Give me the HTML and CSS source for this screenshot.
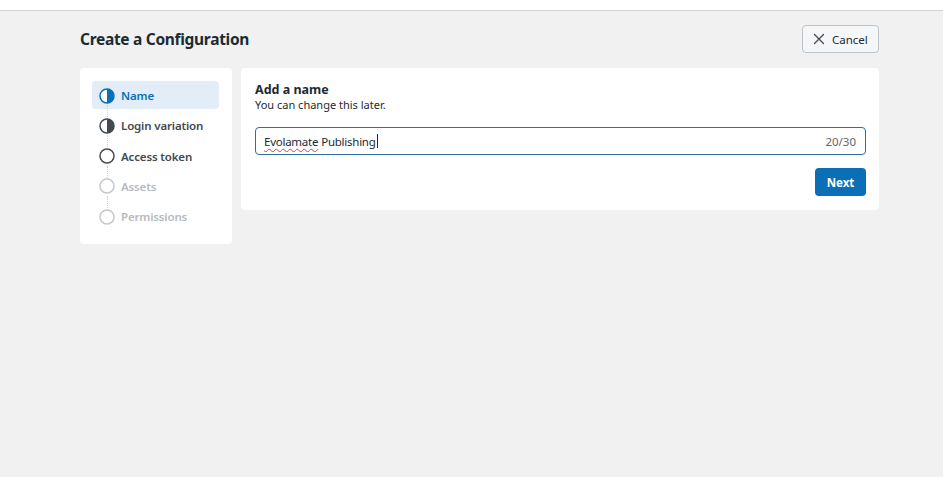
FILE: index.html
```html
<!DOCTYPE html>
<html lang="en">
<head>
<meta charset="utf-8">
<title>Create a Configuration</title>
<link rel="stylesheet" href="styles.css">
</head>
<body>
<div class="topbar"></div>
<main class="page">
  <header class="page-header">
    <h1 class="page-title">Create a Configuration</h1>
    <button class="btn-cancel" type="button">
      <svg class="x-icon" width="12" height="12" viewBox="0 0 12 12" aria-hidden="true">
        <path d="M1.5 1.5 L10.5 10.5 M10.5 1.5 L1.5 10.5" stroke="#444950" stroke-width="1.3" stroke-linecap="round" fill="none"/>
      </svg>
      <span>Cancel</span>
    </button>
  </header>
  <div class="content">
    <nav class="steps">
      <div class="step step-active">
        <svg class="step-icon" width="16" height="16" viewBox="0 0 16 16">
          <circle cx="8" cy="8" r="7" fill="#fff" stroke="#0a6fb5" stroke-width="1.5"/>
          <path d="M8 1 A7 7 0 0 1 8 15 Z" fill="#0a6fb5"/>
        </svg>
        <span class="step-label">Name</span>
      </div>
      <div class="step step-done">
        <svg class="step-icon" width="16" height="16" viewBox="0 0 16 16">
          <circle cx="8" cy="8" r="7" fill="#fff" stroke="#444950" stroke-width="1.5"/>
          <path d="M8 1 A7 7 0 0 1 8 15 Z" fill="#444950"/>
        </svg>
        <span class="step-label">Login variation</span>
      </div>
      <div class="step step-next">
        <svg class="step-icon" width="16" height="16" viewBox="0 0 16 16">
          <circle cx="8" cy="8" r="7" fill="#fff" stroke="#444950" stroke-width="1.5"/>
        </svg>
        <span class="step-label">Access token</span>
      </div>
      <div class="step step-disabled">
        <svg class="step-icon" width="16" height="16" viewBox="0 0 16 16">
          <circle cx="8" cy="8" r="7" fill="#fff" stroke="#c4c7cb" stroke-width="1.5"/>
        </svg>
        <span class="step-label">Assets</span>
      </div>
      <div class="step step-disabled step-last">
        <svg class="step-icon" width="16" height="16" viewBox="0 0 16 16">
          <circle cx="8" cy="8" r="7" fill="#fff" stroke="#c4c7cb" stroke-width="1.5"/>
        </svg>
        <span class="step-label">Permissions</span>
      </div>
    </nav>
    <section class="card">
      <h2 class="card-title">Add a name</h2>
      <p class="card-sub">You can change this later.</p>
      <div class="field">
        <span class="field-value"><span class="spell">Evolamate</span> Publishing<span class="caret"></span></span>
        <span class="field-count">20/30</span>
      </div>
      <div class="actions">
        <button class="btn-next" type="button">Next</button>
      </div>
    </section>
  </div>
</main>
</body>
</html>
```

FILE: styles.css
```css
* { box-sizing: border-box; }

html, body {
  margin: 0;
  padding: 0;
  background: #f1f1f1;
  font-family: "Noto Sans", "Open Sans", sans-serif;
  color: #1c2b33;
}

.topbar {
  height: 11px;
  background: #fff;
  border-bottom: 1px solid #d4d4d4;
}

.page {
  padding: 0 64px 0 80px;
}

.page-header {
  display: flex;
  align-items: center;
  justify-content: space-between;
  margin-top: 14px;
  height: 28px;
}

.page-title {
  margin: 0;
  font-size: 15.5px;
  font-weight: 700;
  color: #1c2b33;
  letter-spacing: -0.3px;
}

.btn-cancel {
  display: flex;
  align-items: center;
  gap: 7px;
  height: 28px;
  width: 77px;
  padding: 0 0 0 10px;
  background: #f5f6f7;
  border: 1px solid #bec3c9;
  border-radius: 4px;
  font-family: inherit;
  font-size: 11.5px;
  color: #1c2b33;
}

.content {
  display: flex;
  align-items: flex-start;
  gap: 9px;
  margin-top: 15px;
}

.steps {
  width: 152px;
  flex: none;
  background: #fff;
  border-radius: 4px;
  padding: 13px 13px 14px 12px;
  display: flex;
  flex-direction: column;
  gap: 2.25px;
}

.step {
  position: relative;
  display: flex;
  align-items: center;
  gap: 6px;
  height: 28px;
  padding-left: 7px;
  padding-top: 1px;
  border-radius: 4px;
  font-size: 11.5px;
  font-weight: 600;
  letter-spacing: -0.15px;
}

.step::after {
  content: "";
  position: absolute;
  left: 14.5px;
  top: 24px;
  height: 12px;
  border-left: 1.5px dotted #d0d3d6;
}

.step-last::after { display: none; }

.step-icon { flex: none; display: block; }

.step-active {
  background: #e2edf7;
  color: #0a6fb5;
}

.step-done, .step-next { color: #444950; }

.step-disabled { color: #b6babe; }

.card {
  flex: 1;
  background: #fff;
  border-radius: 4px;
  padding: 14px 13px 14px 14px;
}

.card-title {
  margin: 0;
  font-size: 12.5px;
  line-height: 16px;
  font-weight: 700;
  color: #1c2b33;
}

.card-sub {
  margin: 0;
  font-size: 11px;
  line-height: 14px;
  color: #1c2b33;
}

.field {
  margin-top: 15px;
  height: 28px;
  border: 1px solid #2d6ea3;
  border-radius: 4px;
  display: flex;
  align-items: center;
  justify-content: space-between;
  padding: 0 9px 0 8px;
  font-size: 11.5px;
}

.field-value { color: #1c2b33; display: flex; align-items: center; letter-spacing: -0.25px; }

.spell {
  text-decoration: underline wavy #e0423c;
  text-decoration-thickness: 1px;
  text-underline-offset: 2px;
  margin-right: 3px;
}

.caret {
  display: inline-block;
  width: 1px;
  height: 14px;
  background: #1c2b33;
  margin-left: 1px;
}

.field-count { color: #65676b; }

.actions {
  display: flex;
  justify-content: flex-end;
  margin-top: 13px;
}

.btn-next {
  height: 28px;
  width: 51px;
  background: #0a6fb5;
  border: none;
  border-radius: 4px;
  color: #fff;
  font-family: inherit;
  font-size: 11.5px;
  font-weight: 700;
}
```
